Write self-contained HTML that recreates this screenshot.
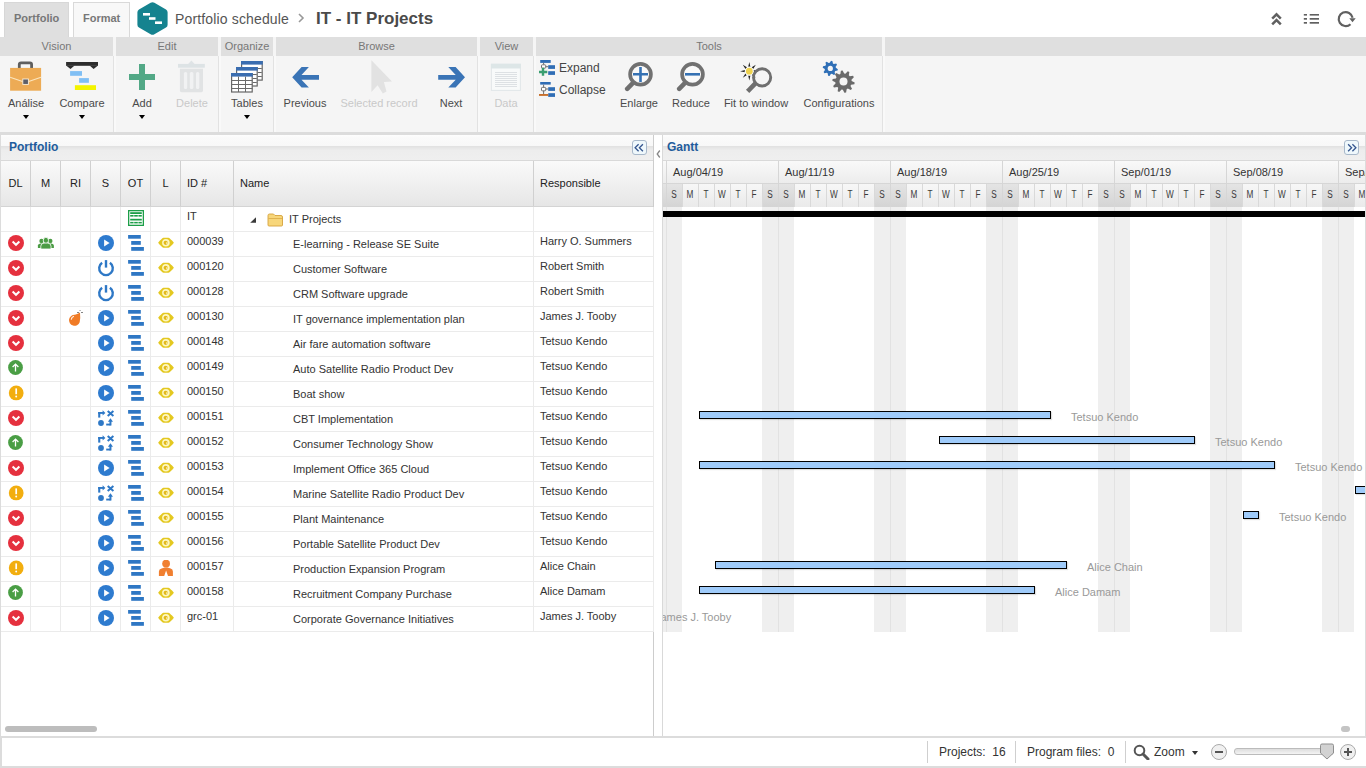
<!DOCTYPE html><html><head><meta charset="utf-8"><style>
*{box-sizing:border-box;margin:0;padding:0}
html,body{width:1366px;height:768px;overflow:hidden;background:#fff;font-family:"Liberation Sans",sans-serif;color:#333}
.a{position:absolute}
.t{position:absolute;white-space:nowrap}
svg{display:block}
.rb-h{position:absolute;top:37px;height:19px;background:#dfdfdf;font-size:11px;color:#777;text-align:center;line-height:19px}
.rb-b{position:absolute;top:56px;height:76px;background:#f4f4f4}
.lbl{position:absolute;font-size:11px;color:#4a4a4a;white-space:nowrap;text-align:center}
.dis{color:#c9c9c9}
.dd{position:absolute;width:0;height:0;border-left:3px solid transparent;border-right:3px solid transparent;border-top:4px solid #000}
.hc{position:absolute;top:161px;height:45px;font-size:11px;color:#222;line-height:45px;border-right:1px solid #d0d0d0;background:linear-gradient(#fafafa,#e6e6e6)}
.row{position:absolute;left:1px;width:652px;height:25px;border-bottom:1px solid #e8e8e8}

.ci{position:absolute}
.dt{position:absolute;font-size:11px;color:#333;white-space:nowrap}
.gl{position:absolute;font-size:11px;color:#999;white-space:nowrap}
.bar{position:absolute;height:8px;background:#9fcbfa;border:1px solid #000;box-shadow:1px 1px 1px rgba(0,0,0,0.12)}
</style></head><body><div class="a" style="left:4px;top:2px;width:65px;height:36px;background:#dfdfdf;border:1px solid #d7d7d7;border-bottom:none"></div><div class="t" style="left:14px;top:12px;font-size:11px;font-weight:bold;color:#777">Portfolio</div><div class="a" style="left:73px;top:2px;width:57px;height:36px;background:#f8f8f8;border:1px solid #d9d9d9;border-bottom:none"></div><div class="t" style="left:83px;top:12px;font-size:11px;font-weight:bold;color:#777">Format</div><svg class="a" style="left:136px;top:1px" width="33" height="35" viewBox="0 0 33 35"><path d="M16.5 1.2 Q17.5 1.2 18.4 1.7 L30 8.4 Q31.6 9.3 31.6 11.2 L31.6 23.8 Q31.6 25.7 30 26.6 L18.4 33.3 Q16.5 34.3 14.6 33.3 L3 26.6 Q1.4 25.7 1.4 23.8 L1.4 11.2 Q1.4 9.3 3 8.4 L14.6 1.7 Q15.5 1.2 16.5 1.2 Z" fill="#15838f"/><rect x="7" y="12" width="7" height="2.6" fill="#fff"/><rect x="13" y="16.2" width="6.5" height="2.6" fill="#fff"/><rect x="19" y="20.4" width="7" height="2.6" fill="#fff"/></svg><div class="t" style="left:175px;top:11px;font-size:14px;letter-spacing:0.15px;color:#555">Portfolio schedule</div><svg class="a" style="left:297px;top:12px" width="8" height="12" viewBox="0 0 8 12"><path d="M2 2 L6 6 L2 10" stroke="#999" stroke-width="1.6" fill="none"/></svg><div class="t" style="left:316px;top:9px;font-size:17px;font-weight:bold;color:#4a4a4a">IT - IT Projects</div><svg class="a" style="left:1270px;top:11px" width="14" height="16" viewBox="0 0 14 16"><path d="M2.2 7.6 L6.5 3.3 L10.8 7.6 M2.2 13.4 L6.5 9.1 L10.8 13.4" stroke="#606060" stroke-width="2.5" fill="none" stroke-linejoin="miter"/></svg><svg class="a" style="left:1302px;top:12px" width="19" height="14" viewBox="0 0 19 14"><g fill="#606060"><rect x="1.8" y="2" width="3.2" height="1.6"/><rect x="1.8" y="6" width="3.2" height="1.7"/><rect x="1.8" y="10" width="3.2" height="1.7"/><rect x="7.7" y="2" width="9.3" height="1.6"/><rect x="7.7" y="6" width="9.3" height="1.7"/><rect x="7.7" y="10" width="9.3" height="1.7"/></g></svg><svg class="a" style="left:1336px;top:9px" width="22" height="20" viewBox="0 0 22 20"><path d="M14.5 15.2 A7 7 0 1 1 16.6 8.7" stroke="#606060" stroke-width="2.2" fill="none"/><path d="M13.3 9.2 L19.7 9.2 L16.5 13.3 Z" fill="#606060"/></svg><div class="a" style="left:0;top:37px;width:1366px;height:95px;background:#f5f5f5"></div><div class="rb-h" style="left:0px;width:113px">Vision</div><div class="a" style="left:113px;top:56px;width:1px;height:76px;background:#e2e2e2"></div><div class="a" style="left:114px;top:56px;width:2px;height:76px;background:#f9f9f9"></div><div class="rb-h" style="left:116px;width:102px">Edit</div><div class="a" style="left:218px;top:56px;width:1px;height:76px;background:#e2e2e2"></div><div class="a" style="left:219px;top:56px;width:2px;height:76px;background:#f9f9f9"></div><div class="rb-h" style="left:221px;width:52px">Organize</div><div class="a" style="left:273px;top:56px;width:1px;height:76px;background:#e2e2e2"></div><div class="a" style="left:274px;top:56px;width:2px;height:76px;background:#f9f9f9"></div><div class="rb-h" style="left:276px;width:201px">Browse</div><div class="a" style="left:477px;top:56px;width:1px;height:76px;background:#e2e2e2"></div><div class="a" style="left:478px;top:56px;width:2px;height:76px;background:#f9f9f9"></div><div class="rb-h" style="left:480px;width:53px">View</div><div class="a" style="left:533px;top:56px;width:1px;height:76px;background:#e2e2e2"></div><div class="a" style="left:534px;top:56px;width:2px;height:76px;background:#f9f9f9"></div><div class="rb-h" style="left:536px;width:346px">Tools</div><div class="a" style="left:882px;top:56px;width:1px;height:76px;background:#e2e2e2"></div><div class="a" style="left:883px;top:56px;width:2px;height:76px;background:#f9f9f9"></div><div class="rb-h" style="left:885px;width:481px"></div><div class="a" style="left:0;top:132px;width:1366px;height:3px;background:#dcdcdc"></div><svg class="a" style="left:9px;top:61px" width="33" height="31" viewBox="0 0 33 31"><path d="M10.3 7 V3.6 Q10.3 1.9 12 1.9 H21 Q22.6 1.9 22.6 3.6 V7" stroke="#5f5f5f" stroke-width="2.8" fill="none"/><rect x="1.1" y="6.9" width="31" height="22.8" fill="#edab55"/><path d="M1.1 16.3 L13.5 20.4 M19.7 20.4 L32 16.3" stroke="#fbe6bf" stroke-width="1.1"/><rect x="13.8" y="18" width="5.6" height="5.4" fill="#5d5e68" stroke="#fdf0d8" stroke-width="0.9"/></svg><div class="lbl " style="left:-34px;width:120px;top:97px">Análise</div><div class="dd" style="left:23px;top:115px"></div><svg class="a" style="left:65px;top:61px" width="34" height="30" viewBox="0 0 34 30"><rect x="1.1" y="1" width="31.9" height="3.8" fill="#2d2d2d"/><path d="M1.1 4.5 L5.5 7.9 L9.6 4.5 Z M24.6 4.5 L28.6 7.9 L33 4.5 Z" fill="#2d2d2d"/><rect x="5.1" y="10.1" width="11.9" height="4.7" fill="#80bff4"/><rect x="14.1" y="17.1" width="9.8" height="4.7" fill="#80bff4"/><rect x="9.9" y="24.2" width="21.1" height="4.8" fill="#f4f400"/></svg><div class="lbl " style="left:22px;width:120px;top:97px">Compare</div><div class="dd" style="left:79px;top:115px"></div><svg class="a" style="left:128px;top:63px" width="28" height="28" viewBox="0 0 28 28"><path d="M11 1 H17 V11 H27 V17 H17 V27 H11 V17 H1 V11 H11 Z" fill="#52a886"/></svg><div class="lbl " style="left:82px;width:120px;top:97px">Add</div><div class="dd" style="left:139px;top:115px"></div><svg class="a" style="left:177px;top:60px" width="29" height="34" viewBox="0 0 29 34"><path d="M11.2 3.9 L14.4 0.4 L17.6 3.9 Z" fill="#dfe4e6"/><rect x="1" y="3.9" width="26.8" height="3.8" fill="#dde3e5"/><path d="M2.9 8.8 H26 V30.6 Q26 32.2 24.4 32.2 H4.5 Q2.9 32.2 2.9 30.6 Z" fill="#e1e3e4"/><g fill="#f1f2f3"><rect x="6.9" y="12.1" width="3.3" height="16.9" rx="1.5"/><rect x="12.8" y="12.1" width="3.6" height="16.9" rx="1.5"/><rect x="19" y="12.1" width="3.3" height="16.9" rx="1.5"/></g></svg><div class="lbl dis" style="left:132px;width:120px;top:97px">Delete</div><svg class="a" style="left:230px;top:60px" width="35" height="34" viewBox="0 0 35 34"><g fill="#fff" stroke="#666" stroke-width="1.2"><rect x="11.6" y="1.6" width="20.6" height="18.5"/><rect x="6.6" y="7.6" width="20.6" height="18.4"/><rect x="1.6" y="13.6" width="20.6" height="18.4"/></g><g fill="#3a6db0"><rect x="11" y="1" width="21.8" height="3.6"/><rect x="6" y="7" width="21.8" height="3.6"/><rect x="1" y="13" width="21.8" height="3.6"/></g><g stroke="#6a6a6a" stroke-width="1"><path d="M1.5 20.5 H22.5 M1.5 24.5 H22.5 M1.5 28.5 H22.5 M8.5 16.6 V32 M15.5 16.6 V32 M22.8 14.5 H26.8 M22.8 18.5 H26.8 M22.8 22.5 H26.8 M27.8 8.5 H31.8 M27.8 12.5 H31.8 M27.8 16.5 H31.8"/></g></svg><div class="lbl " style="left:187px;width:120px;top:97px">Tables</div><div class="dd" style="left:244px;top:115px"></div><svg class="a" style="left:291px;top:66px" width="30" height="23" viewBox="0 0 30 23"><path d="M1.20 11.30 L10.60 0.90 L17.90 0.90 L10.50 9.10 L28.00 9.10 L28.00 13.70 L10.50 13.70 L17.90 21.60 L10.60 21.60 Z" fill="#3a74b6"/></svg><div class="lbl " style="left:245px;width:120px;top:97px">Previous</div><svg class="a" style="left:370px;top:60px" width="24" height="35" viewBox="0 0 24 35"><path d="M1.4 0.2 L22 21.5 L13.9 22 L16.5 31.4 L12.8 33.5 L7.6 25.2 L1.4 31.9 Z" fill="#e2e2e2"/></svg><div class="lbl dis" style="left:319px;width:120px;top:97px">Selected record</div><svg class="a" style="left:437px;top:66px" width="30" height="23" viewBox="0 0 30 23"><path d="M28.00 11.30 L18.60 0.90 L11.30 0.90 L18.70 9.10 L1.20 9.10 L1.20 13.70 L18.70 13.70 L11.30 21.60 L18.60 21.60 Z" fill="#3a74b6"/></svg><div class="lbl " style="left:391px;width:120px;top:97px">Next</div><svg class="a" style="left:490px;top:63px" width="32" height="29" viewBox="0 0 32 29"><rect x="1.4" y="1.3" width="29" height="26.1" fill="#f8fafa" stroke="#e2e6e8" stroke-width="1"/><rect x="0.9" y="0.8" width="30" height="4.7" fill="#dde6e7"/><path d="M5 9.5 H27 M5 11.5 H27 M5 13.5 H27 M5 15.5 H27 M5 17.5 H27 M5 19.5 H27 M5 21.5 H27 M5 23.5 H27" stroke="#dde1e4" stroke-width="1"/></svg><div class="lbl dis" style="left:446px;width:120px;top:97px">Data</div><svg class="a" style="left:535px;top:56px" width="30" height="44" viewBox="0 0 30 44"><g fill="#2f6db5"><rect x="5.2" y="4" width="10.5" height="2.9"/><rect x="13.2" y="9.2" width="6.8" height="3.7"/><rect x="13.2" y="15.2" width="6.8" height="3.7"/><rect x="5.2" y="26" width="10.5" height="2.6"/><rect x="13.2" y="31.2" width="6.8" height="3.7"/><rect x="13.2" y="37.2" width="6.8" height="3.7"/></g><g stroke="#707070" stroke-width="1" fill="none"><path d="M8.6 6.9 V8.6 M10.9 10.7 H13.2"/><rect x="6.5" y="8.8" width="4.2" height="3.4" rx="0.8" fill="#fff"/><path d="M8.6 28.6 V31.2 M8.6 35 V38 M10.9 33 H13.2"/><rect x="6.5" y="31.4" width="4.2" height="3.4" rx="0.8" fill="#fff"/></g><path d="M4 16 H12.3 M8 11.8 V19.7" stroke="#3a9e70" stroke-width="2.4"/><rect x="4" y="38" width="9.2" height="1.9" fill="#c8702d"/></svg><div class="t" style="left:559px;top:61px;font-size:12px;color:#444">Expand</div><div class="t" style="left:559px;top:83px;font-size:12px;color:#444">Collapse</div><svg class="a" style="left:622px;top:61px" width="32" height="31" viewBox="0 0 32 31"><path d="M5.2 27.8 L10.8 22.2" stroke="#6f6f6f" stroke-width="4.6" stroke-linecap="round"/><circle cx="18.5" cy="13.3" r="10.4" fill="#fafafa" stroke="#717171" stroke-width="3.7"/><path d="M18.5 6 V21 M11 13.3 H26" stroke="#3672b4" stroke-width="2.6"/></svg><div class="lbl " style="left:579px;width:120px;top:97px">Enlarge</div><svg class="a" style="left:674px;top:61px" width="32" height="31" viewBox="0 0 32 31"><path d="M5.2 27.8 L10.8 22.2" stroke="#6f6f6f" stroke-width="4.6" stroke-linecap="round"/><circle cx="18.5" cy="13.3" r="10.4" fill="#fafafa" stroke="#717171" stroke-width="3.7"/><path d="M11 13.3 H26" stroke="#3672b4" stroke-width="2.6"/></svg><div class="lbl " style="left:631px;width:120px;top:97px">Reduce</div><svg class="a" style="left:739px;top:60px" width="35" height="34" viewBox="0 0 35 34"><path d="M9.14 7.16 L10.30 2.00 L11.46 7.16 Z M12.33 7.53 L16.81 4.69 L13.97 9.17 Z M14.34 10.04 L19.50 11.20 L14.34 12.36 Z M13.97 13.23 L16.81 17.71 L12.33 14.87 Z M11.46 15.24 L10.30 20.40 L9.14 15.24 Z M8.27 14.87 L3.79 17.71 L6.63 13.23 Z M6.26 12.36 L1.10 11.20 L6.26 10.04 Z M6.63 9.17 L3.79 4.69 L8.27 7.53 Z " fill="#222"/><circle cx="10.3" cy="11.2" r="4.6" fill="#fafafa"/><circle cx="10.3" cy="11.2" r="3.4" fill="#eed24e"/><path d="M10.2 29.8 L14.8 25" stroke="#6f6f6f" stroke-width="4.6" stroke-linecap="square"/><circle cx="23.1" cy="17.4" r="8.6" fill="none" stroke="#6f6f6f" stroke-width="2.9"/></svg><div class="lbl " style="left:696px;width:120px;top:97px">Fit to window</div><svg class="a" style="left:818px;top:58px" width="40" height="36" viewBox="0 0 40 36"><path d="M19.86 11.14 L19.57 12.61 L17.24 13.04 L16.63 13.95 L17.12 16.27 L15.88 17.10 L13.93 15.76 L12.85 15.97 L11.56 17.96 L10.09 17.67 L9.66 15.34 L8.75 14.73 L6.43 15.22 L5.60 13.98 L6.94 12.03 L6.73 10.95 L4.74 9.66 L5.03 8.19 L7.36 7.76 L7.97 6.85 L7.48 4.53 L8.72 3.70 L10.67 5.04 L11.75 4.83 L13.04 2.84 L14.51 3.13 L14.94 5.46 L15.85 6.07 L18.17 5.58 L19.00 6.82 L17.66 8.77 L17.87 9.85 Z" fill="#2f6fb6"/><circle cx="12.3" cy="10.4" r="2.6" fill="#f4f4f4"/><path d="M36.67 24.48 L36.39 26.21 L33.08 26.74 L32.49 27.88 L34.02 30.87 L32.77 32.12 L29.78 30.59 L28.64 31.18 L28.11 34.49 L26.38 34.77 L24.86 31.77 L23.59 31.57 L21.21 33.95 L19.65 33.15 L20.17 29.84 L19.26 28.93 L15.95 29.45 L15.15 27.89 L17.53 25.51 L17.33 24.24 L14.33 22.72 L14.61 20.99 L17.92 20.46 L18.51 19.32 L16.98 16.33 L18.23 15.08 L21.22 16.61 L22.36 16.02 L22.89 12.71 L24.62 12.43 L26.14 15.43 L27.41 15.63 L29.79 13.25 L31.35 14.05 L30.83 17.36 L31.74 18.27 L35.05 17.75 L35.85 19.31 L33.47 21.69 L33.67 22.96 Z" fill="#6a6a6a"/><circle cx="25.5" cy="23.6" r="4.0" fill="#f4f4f4"/></svg><div class="lbl " style="left:779px;width:120px;top:97px">Configurations</div><div class="a" style="left:0;top:135px;width:655px;height:602px;background:#fff;border-left:1px solid #dcdcdc"></div><div class="a" style="left:653px;top:135px;width:1px;height:602px;background:#cdcdcd"></div><div class="a" style="left:1px;top:135px;width:652px;height:26px;background:linear-gradient(#fdfdfd 0,#fafafa 10%,#f8f8f8 42%,#e2e2e2 46%,#e8e8e8 54%,#ededed 62%,#efefef 100%);border-bottom:1px solid #d9d9d9"></div><div class="t" style="left:9px;top:140px;font-size:12px;font-weight:bold;color:#1f5c9c">Portfolio</div><div class="a" style="left:632px;top:140px;width:15px;height:15px;border:1px solid #a8b8ca;border-radius:3px;background:#eff8fc"></div><svg class="a" style="left:633px;top:141px" width="13" height="13" viewBox="0 0 13 13"><path d="M5.6 3.2 L2.1 6.7 L5.6 10.2 M9.9 3.2 L6.4 6.7 L9.9 10.2" stroke="#34558f" stroke-width="1.3" fill="none"/></svg><div class="hc" style="left:1px;width:30px;text-align:center">DL</div><div class="hc" style="left:31px;width:30px;text-align:center">M</div><div class="hc" style="left:61px;width:30px;text-align:center">RI</div><div class="hc" style="left:91px;width:30px;text-align:center">S</div><div class="hc" style="left:121px;width:30px;text-align:center">OT</div><div class="hc" style="left:151px;width:30px;text-align:center">L</div><div class="hc" style="left:181px;width:53px;padding-left:6px;">ID #</div><div class="hc" style="left:234px;width:300px;padding-left:6px;">Name</div><div class="hc" style="left:534px;width:119px;padding-left:6px;border-right:none">Responsible</div><div class="a" style="left:1px;top:206px;width:652px;height:1px;background:#d4d4d4"></div><div class="a" style="left:30px;top:207px;width:1px;height:25px;background:#ebebeb"></div><div class="a" style="left:60px;top:207px;width:1px;height:25px;background:#ebebeb"></div><div class="a" style="left:90px;top:207px;width:1px;height:25px;background:#ebebeb"></div><div class="a" style="left:120px;top:207px;width:1px;height:25px;background:#ebebeb"></div><div class="a" style="left:150px;top:207px;width:1px;height:25px;background:#ebebeb"></div><div class="a" style="left:180px;top:207px;width:1px;height:25px;background:#ebebeb"></div><div class="a" style="left:233px;top:207px;width:1px;height:25px;background:#ebebeb"></div><div class="a" style="left:533px;top:207px;width:1px;height:25px;background:#ebebeb"></div><div class="a" style="left:653px;top:207px;width:1px;height:25px;background:#ebebeb"></div><div class="a" style="left:1px;top:231px;width:652px;height:1px;background:#ebebeb"></div><div class="ci" style="left:128px;top:210px"><svg width="16" height="16" viewBox="0 0 16 16"><rect x="0.65" y="0.65" width="14.7" height="14.7" fill="#fff" stroke="#1c9e48" stroke-width="1.3"/><g fill="#1c9e48"><rect x="2.2" y="2.2" width="11.6" height="1.8"/><rect x="2.2" y="5" width="3.4" height="1.6"/><rect x="6.2" y="5" width="3.6" height="1.6"/><rect x="10.4" y="5" width="3.4" height="1.6"/><rect x="2.2" y="8.8" width="11.6" height="1.7"/><rect x="2.2" y="11.9" width="3.4" height="1.5"/><rect x="6.2" y="11.9" width="3.6" height="1.5"/><rect x="10.4" y="11.9" width="3.4" height="1.5"/></g></svg></div><div class="dt" style="left:187px;top:210px">IT</div><svg class="a" style="left:249px;top:216px" width="8" height="8" viewBox="0 0 8 8"><path d="M7 1.2 V6.8 H1.2 Z" fill="#3a3a3a"/></svg><svg class="a" style="left:267px;top:213px" width="17" height="14" viewBox="0 0 17 14"><path d="M1 2.5 Q1 1 2.5 1 H6.5 L8 2.5 H14 Q15.5 2.5 15.5 4 V12 Q15.5 13 14.5 13 H2 Q1 13 1 12 Z" fill="#f7d67a" stroke="#d6a33c" stroke-width="0.9"/><path d="M1.5 5.5 H15.5" stroke="#d6a33c" stroke-width="0.7"/></svg><div class="dt" style="left:289px;top:213px">IT Projects</div><div class="a" style="left:30px;top:232px;width:1px;height:25px;background:#ebebeb"></div><div class="a" style="left:60px;top:232px;width:1px;height:25px;background:#ebebeb"></div><div class="a" style="left:90px;top:232px;width:1px;height:25px;background:#ebebeb"></div><div class="a" style="left:120px;top:232px;width:1px;height:25px;background:#ebebeb"></div><div class="a" style="left:150px;top:232px;width:1px;height:25px;background:#ebebeb"></div><div class="a" style="left:180px;top:232px;width:1px;height:25px;background:#ebebeb"></div><div class="a" style="left:233px;top:232px;width:1px;height:25px;background:#ebebeb"></div><div class="a" style="left:533px;top:232px;width:1px;height:25px;background:#ebebeb"></div><div class="a" style="left:653px;top:232px;width:1px;height:25px;background:#ebebeb"></div><div class="a" style="left:1px;top:256px;width:652px;height:1px;background:#ebebeb"></div><div class="ci" style="left:8px;top:235px"><svg width="16" height="16" viewBox="0 0 16 16"><circle cx="8" cy="8" r="8" fill="#e5303e"/><path d="M4.6 6.6 L8 9.8 L11.4 6.6" stroke="#fff" stroke-width="2" fill="none"/></svg></div><div class="ci" style="left:37px;top:236px"><svg width="18" height="14" viewBox="0 0 18 14"><g fill="#4b9c44"><circle cx="4.5" cy="4.9" r="2.2"/><circle cx="13.3" cy="4.9" r="2.2"/><path d="M0.9 12 V9.6 Q0.9 7.6 3.4 7.4 H6 V12 Z"/><path d="M16.9 12 V9.6 Q16.9 7.6 14.4 7.4 H11.8 V12 Z"/></g><g fill="#4b9c44" stroke="#fff" stroke-width="0.8"><ellipse cx="8.9" cy="4.4" rx="2.6" ry="3.1"/><path d="M3.8 13 V10.2 Q3.8 7.2 7 7.1 H10.8 Q14 7.2 14 10.2 V13 Z"/></g></svg></div><div class="ci" style="left:98px;top:235px"><svg width="16" height="16" viewBox="0 0 16 16"><circle cx="8" cy="8" r="8" fill="#2e7bcf"/><path d="M6.1 4.4 L11.6 8 L6.1 11.6 Z" fill="#fff"/></svg></div><div class="ci" style="left:127px;top:235px"><svg width="17" height="17" viewBox="0 0 17 17"><rect x="1.1" y="0" width="12.7" height="3.7" fill="#2e77c4"/><rect x="4.2" y="6" width="9.6" height="3.8" fill="#2e77c4"/><rect x="4.2" y="12" width="12.7" height="3.8" fill="#2e77c4"/></svg></div><div class="ci" style="left:158px;top:237px"><svg width="17" height="12" viewBox="0 0 17 12"><path d="M0.1 5.8 Q3.5 1.6 5.4 0.8 H10.5 Q12.5 1.6 15.9 5.8 Q12.5 10 10.5 10.8 H5.4 Q3.5 10 0.1 5.8 Z" fill="#e4c820"/><circle cx="7.9" cy="5.8" r="3.8" fill="#fdf7c0"/><circle cx="7.7" cy="5.8" r="2.1" fill="#e2b91c"/><circle cx="8.8" cy="6.1" r="0.8" fill="#fdf7c0"/></svg></div><div class="dt" style="left:187px;top:235px">000039</div><div class="dt" style="left:293px;top:238px">E-learning - Release SE Suite</div><div class="dt" style="left:540px;top:235px">Harry O. Summers</div><div class="a" style="left:30px;top:257px;width:1px;height:25px;background:#ebebeb"></div><div class="a" style="left:60px;top:257px;width:1px;height:25px;background:#ebebeb"></div><div class="a" style="left:90px;top:257px;width:1px;height:25px;background:#ebebeb"></div><div class="a" style="left:120px;top:257px;width:1px;height:25px;background:#ebebeb"></div><div class="a" style="left:150px;top:257px;width:1px;height:25px;background:#ebebeb"></div><div class="a" style="left:180px;top:257px;width:1px;height:25px;background:#ebebeb"></div><div class="a" style="left:233px;top:257px;width:1px;height:25px;background:#ebebeb"></div><div class="a" style="left:533px;top:257px;width:1px;height:25px;background:#ebebeb"></div><div class="a" style="left:653px;top:257px;width:1px;height:25px;background:#ebebeb"></div><div class="a" style="left:1px;top:281px;width:652px;height:1px;background:#ebebeb"></div><div class="ci" style="left:8px;top:260px"><svg width="16" height="16" viewBox="0 0 16 16"><circle cx="8" cy="8" r="8" fill="#e5303e"/><path d="M4.6 6.6 L8 9.8 L11.4 6.6" stroke="#fff" stroke-width="2" fill="none"/></svg></div><div class="ci" style="left:97px;top:259px"><svg width="18" height="18" viewBox="0 0 18 18"><path d="M12.9 3.73 A6.8 6.8 0 1 1 5.1 3.73" stroke="#2e78c6" stroke-width="2.4" fill="none"/><path d="M9 1.1 V8.6" stroke="#2e78c6" stroke-width="2.4" fill="none"/></svg></div><div class="ci" style="left:127px;top:260px"><svg width="17" height="17" viewBox="0 0 17 17"><rect x="1.1" y="0" width="12.7" height="3.7" fill="#2e77c4"/><rect x="4.2" y="6" width="9.6" height="3.8" fill="#2e77c4"/><rect x="4.2" y="12" width="12.7" height="3.8" fill="#2e77c4"/></svg></div><div class="ci" style="left:158px;top:262px"><svg width="17" height="12" viewBox="0 0 17 12"><path d="M0.1 5.8 Q3.5 1.6 5.4 0.8 H10.5 Q12.5 1.6 15.9 5.8 Q12.5 10 10.5 10.8 H5.4 Q3.5 10 0.1 5.8 Z" fill="#e4c820"/><circle cx="7.9" cy="5.8" r="3.8" fill="#fdf7c0"/><circle cx="7.7" cy="5.8" r="2.1" fill="#e2b91c"/><circle cx="8.8" cy="6.1" r="0.8" fill="#fdf7c0"/></svg></div><div class="dt" style="left:187px;top:260px">000120</div><div class="dt" style="left:293px;top:263px">Customer Software</div><div class="dt" style="left:540px;top:260px">Robert Smith</div><div class="a" style="left:30px;top:282px;width:1px;height:25px;background:#ebebeb"></div><div class="a" style="left:60px;top:282px;width:1px;height:25px;background:#ebebeb"></div><div class="a" style="left:90px;top:282px;width:1px;height:25px;background:#ebebeb"></div><div class="a" style="left:120px;top:282px;width:1px;height:25px;background:#ebebeb"></div><div class="a" style="left:150px;top:282px;width:1px;height:25px;background:#ebebeb"></div><div class="a" style="left:180px;top:282px;width:1px;height:25px;background:#ebebeb"></div><div class="a" style="left:233px;top:282px;width:1px;height:25px;background:#ebebeb"></div><div class="a" style="left:533px;top:282px;width:1px;height:25px;background:#ebebeb"></div><div class="a" style="left:653px;top:282px;width:1px;height:25px;background:#ebebeb"></div><div class="a" style="left:1px;top:306px;width:652px;height:1px;background:#ebebeb"></div><div class="ci" style="left:8px;top:285px"><svg width="16" height="16" viewBox="0 0 16 16"><circle cx="8" cy="8" r="8" fill="#e5303e"/><path d="M4.6 6.6 L8 9.8 L11.4 6.6" stroke="#fff" stroke-width="2" fill="none"/></svg></div><div class="ci" style="left:97px;top:284px"><svg width="18" height="18" viewBox="0 0 18 18"><path d="M12.9 3.73 A6.8 6.8 0 1 1 5.1 3.73" stroke="#2e78c6" stroke-width="2.4" fill="none"/><path d="M9 1.1 V8.6" stroke="#2e78c6" stroke-width="2.4" fill="none"/></svg></div><div class="ci" style="left:127px;top:285px"><svg width="17" height="17" viewBox="0 0 17 17"><rect x="1.1" y="0" width="12.7" height="3.7" fill="#2e77c4"/><rect x="4.2" y="6" width="9.6" height="3.8" fill="#2e77c4"/><rect x="4.2" y="12" width="12.7" height="3.8" fill="#2e77c4"/></svg></div><div class="ci" style="left:158px;top:287px"><svg width="17" height="12" viewBox="0 0 17 12"><path d="M0.1 5.8 Q3.5 1.6 5.4 0.8 H10.5 Q12.5 1.6 15.9 5.8 Q12.5 10 10.5 10.8 H5.4 Q3.5 10 0.1 5.8 Z" fill="#e4c820"/><circle cx="7.9" cy="5.8" r="3.8" fill="#fdf7c0"/><circle cx="7.7" cy="5.8" r="2.1" fill="#e2b91c"/><circle cx="8.8" cy="6.1" r="0.8" fill="#fdf7c0"/></svg></div><div class="dt" style="left:187px;top:285px">000128</div><div class="dt" style="left:293px;top:288px">CRM Software upgrade</div><div class="dt" style="left:540px;top:285px">Robert Smith</div><div class="a" style="left:30px;top:307px;width:1px;height:25px;background:#ebebeb"></div><div class="a" style="left:60px;top:307px;width:1px;height:25px;background:#ebebeb"></div><div class="a" style="left:90px;top:307px;width:1px;height:25px;background:#ebebeb"></div><div class="a" style="left:120px;top:307px;width:1px;height:25px;background:#ebebeb"></div><div class="a" style="left:150px;top:307px;width:1px;height:25px;background:#ebebeb"></div><div class="a" style="left:180px;top:307px;width:1px;height:25px;background:#ebebeb"></div><div class="a" style="left:233px;top:307px;width:1px;height:25px;background:#ebebeb"></div><div class="a" style="left:533px;top:307px;width:1px;height:25px;background:#ebebeb"></div><div class="a" style="left:653px;top:307px;width:1px;height:25px;background:#ebebeb"></div><div class="a" style="left:1px;top:331px;width:652px;height:1px;background:#ebebeb"></div><div class="ci" style="left:8px;top:310px"><svg width="16" height="16" viewBox="0 0 16 16"><circle cx="8" cy="8" r="8" fill="#e5303e"/><path d="M4.6 6.6 L8 9.8 L11.4 6.6" stroke="#fff" stroke-width="2" fill="none"/></svg></div><div class="ci" style="left:67px;top:309px"><svg width="17" height="18" viewBox="0 0 17 18"><path d="M13 3.6 Q13.6 9 12.67 13.18 A5.5 5.5 0 1 1 7.98 5.82 Q11 5.2 13 3.6 Z" fill="#f07b26"/><path d="M4.2 10.6 Q4.6 8 7 7.3" stroke="#fff" stroke-width="1.1" fill="none" opacity="0.9"/><g fill="#777"><rect x="10" y="3" width="2" height="0.9"/><rect x="14" y="3" width="2" height="0.9"/><rect x="12.6" y="1" width="0.9" height="1"/></g></svg></div><div class="ci" style="left:98px;top:310px"><svg width="16" height="16" viewBox="0 0 16 16"><circle cx="8" cy="8" r="8" fill="#2e7bcf"/><path d="M6.1 4.4 L11.6 8 L6.1 11.6 Z" fill="#fff"/></svg></div><div class="ci" style="left:127px;top:310px"><svg width="17" height="17" viewBox="0 0 17 17"><rect x="1.1" y="0" width="12.7" height="3.7" fill="#2e77c4"/><rect x="4.2" y="6" width="9.6" height="3.8" fill="#2e77c4"/><rect x="4.2" y="12" width="12.7" height="3.8" fill="#2e77c4"/></svg></div><div class="ci" style="left:158px;top:312px"><svg width="17" height="12" viewBox="0 0 17 12"><path d="M0.1 5.8 Q3.5 1.6 5.4 0.8 H10.5 Q12.5 1.6 15.9 5.8 Q12.5 10 10.5 10.8 H5.4 Q3.5 10 0.1 5.8 Z" fill="#e4c820"/><circle cx="7.9" cy="5.8" r="3.8" fill="#fdf7c0"/><circle cx="7.7" cy="5.8" r="2.1" fill="#e2b91c"/><circle cx="8.8" cy="6.1" r="0.8" fill="#fdf7c0"/></svg></div><div class="dt" style="left:187px;top:310px">000130</div><div class="dt" style="left:293px;top:313px">IT governance implementation plan</div><div class="dt" style="left:540px;top:310px">James J. Tooby</div><div class="a" style="left:30px;top:332px;width:1px;height:25px;background:#ebebeb"></div><div class="a" style="left:60px;top:332px;width:1px;height:25px;background:#ebebeb"></div><div class="a" style="left:90px;top:332px;width:1px;height:25px;background:#ebebeb"></div><div class="a" style="left:120px;top:332px;width:1px;height:25px;background:#ebebeb"></div><div class="a" style="left:150px;top:332px;width:1px;height:25px;background:#ebebeb"></div><div class="a" style="left:180px;top:332px;width:1px;height:25px;background:#ebebeb"></div><div class="a" style="left:233px;top:332px;width:1px;height:25px;background:#ebebeb"></div><div class="a" style="left:533px;top:332px;width:1px;height:25px;background:#ebebeb"></div><div class="a" style="left:653px;top:332px;width:1px;height:25px;background:#ebebeb"></div><div class="a" style="left:1px;top:356px;width:652px;height:1px;background:#ebebeb"></div><div class="ci" style="left:8px;top:335px"><svg width="16" height="16" viewBox="0 0 16 16"><circle cx="8" cy="8" r="8" fill="#e5303e"/><path d="M4.6 6.6 L8 9.8 L11.4 6.6" stroke="#fff" stroke-width="2" fill="none"/></svg></div><div class="ci" style="left:98px;top:335px"><svg width="16" height="16" viewBox="0 0 16 16"><circle cx="8" cy="8" r="8" fill="#2e7bcf"/><path d="M6.1 4.4 L11.6 8 L6.1 11.6 Z" fill="#fff"/></svg></div><div class="ci" style="left:127px;top:335px"><svg width="17" height="17" viewBox="0 0 17 17"><rect x="1.1" y="0" width="12.7" height="3.7" fill="#2e77c4"/><rect x="4.2" y="6" width="9.6" height="3.8" fill="#2e77c4"/><rect x="4.2" y="12" width="12.7" height="3.8" fill="#2e77c4"/></svg></div><div class="ci" style="left:158px;top:337px"><svg width="17" height="12" viewBox="0 0 17 12"><path d="M0.1 5.8 Q3.5 1.6 5.4 0.8 H10.5 Q12.5 1.6 15.9 5.8 Q12.5 10 10.5 10.8 H5.4 Q3.5 10 0.1 5.8 Z" fill="#e4c820"/><circle cx="7.9" cy="5.8" r="3.8" fill="#fdf7c0"/><circle cx="7.7" cy="5.8" r="2.1" fill="#e2b91c"/><circle cx="8.8" cy="6.1" r="0.8" fill="#fdf7c0"/></svg></div><div class="dt" style="left:187px;top:335px">000148</div><div class="dt" style="left:293px;top:338px">Air fare automation software</div><div class="dt" style="left:540px;top:335px">Tetsuo Kendo</div><div class="a" style="left:30px;top:357px;width:1px;height:25px;background:#ebebeb"></div><div class="a" style="left:60px;top:357px;width:1px;height:25px;background:#ebebeb"></div><div class="a" style="left:90px;top:357px;width:1px;height:25px;background:#ebebeb"></div><div class="a" style="left:120px;top:357px;width:1px;height:25px;background:#ebebeb"></div><div class="a" style="left:150px;top:357px;width:1px;height:25px;background:#ebebeb"></div><div class="a" style="left:180px;top:357px;width:1px;height:25px;background:#ebebeb"></div><div class="a" style="left:233px;top:357px;width:1px;height:25px;background:#ebebeb"></div><div class="a" style="left:533px;top:357px;width:1px;height:25px;background:#ebebeb"></div><div class="a" style="left:653px;top:357px;width:1px;height:25px;background:#ebebeb"></div><div class="a" style="left:1px;top:381px;width:652px;height:1px;background:#ebebeb"></div><div class="ci" style="left:8px;top:360px"><svg width="16" height="16" viewBox="0 0 16 16"><circle cx="7.5" cy="7.5" r="7.4" fill="#4a9e45"/><path d="M7.5 11.6 V4.2 M4.6 7 L7.5 4.1 L10.4 7" stroke="#fff" stroke-width="1.3" fill="none"/></svg></div><div class="ci" style="left:98px;top:360px"><svg width="16" height="16" viewBox="0 0 16 16"><circle cx="8" cy="8" r="8" fill="#2e7bcf"/><path d="M6.1 4.4 L11.6 8 L6.1 11.6 Z" fill="#fff"/></svg></div><div class="ci" style="left:127px;top:360px"><svg width="17" height="17" viewBox="0 0 17 17"><rect x="1.1" y="0" width="12.7" height="3.7" fill="#2e77c4"/><rect x="4.2" y="6" width="9.6" height="3.8" fill="#2e77c4"/><rect x="4.2" y="12" width="12.7" height="3.8" fill="#2e77c4"/></svg></div><div class="ci" style="left:158px;top:362px"><svg width="17" height="12" viewBox="0 0 17 12"><path d="M0.1 5.8 Q3.5 1.6 5.4 0.8 H10.5 Q12.5 1.6 15.9 5.8 Q12.5 10 10.5 10.8 H5.4 Q3.5 10 0.1 5.8 Z" fill="#e4c820"/><circle cx="7.9" cy="5.8" r="3.8" fill="#fdf7c0"/><circle cx="7.7" cy="5.8" r="2.1" fill="#e2b91c"/><circle cx="8.8" cy="6.1" r="0.8" fill="#fdf7c0"/></svg></div><div class="dt" style="left:187px;top:360px">000149</div><div class="dt" style="left:293px;top:363px">Auto Satellite Radio Product Dev</div><div class="dt" style="left:540px;top:360px">Tetsuo Kendo</div><div class="a" style="left:30px;top:382px;width:1px;height:25px;background:#ebebeb"></div><div class="a" style="left:60px;top:382px;width:1px;height:25px;background:#ebebeb"></div><div class="a" style="left:90px;top:382px;width:1px;height:25px;background:#ebebeb"></div><div class="a" style="left:120px;top:382px;width:1px;height:25px;background:#ebebeb"></div><div class="a" style="left:150px;top:382px;width:1px;height:25px;background:#ebebeb"></div><div class="a" style="left:180px;top:382px;width:1px;height:25px;background:#ebebeb"></div><div class="a" style="left:233px;top:382px;width:1px;height:25px;background:#ebebeb"></div><div class="a" style="left:533px;top:382px;width:1px;height:25px;background:#ebebeb"></div><div class="a" style="left:653px;top:382px;width:1px;height:25px;background:#ebebeb"></div><div class="a" style="left:1px;top:406px;width:652px;height:1px;background:#ebebeb"></div><div class="ci" style="left:8px;top:385px"><svg width="16" height="16" viewBox="0 0 16 16"><circle cx="8.2" cy="7.9" r="7.4" fill="#f2ae0f"/><path d="M8.2 3.4 V9.2" stroke="#fff" stroke-width="1.7" fill="none"/><circle cx="8.2" cy="11.5" r="0.95" fill="#fff"/></svg></div><div class="ci" style="left:98px;top:385px"><svg width="16" height="16" viewBox="0 0 16 16"><circle cx="8" cy="8" r="8" fill="#2e7bcf"/><path d="M6.1 4.4 L11.6 8 L6.1 11.6 Z" fill="#fff"/></svg></div><div class="ci" style="left:127px;top:385px"><svg width="17" height="17" viewBox="0 0 17 17"><rect x="1.1" y="0" width="12.7" height="3.7" fill="#2e77c4"/><rect x="4.2" y="6" width="9.6" height="3.8" fill="#2e77c4"/><rect x="4.2" y="12" width="12.7" height="3.8" fill="#2e77c4"/></svg></div><div class="ci" style="left:158px;top:387px"><svg width="17" height="12" viewBox="0 0 17 12"><path d="M0.1 5.8 Q3.5 1.6 5.4 0.8 H10.5 Q12.5 1.6 15.9 5.8 Q12.5 10 10.5 10.8 H5.4 Q3.5 10 0.1 5.8 Z" fill="#e4c820"/><circle cx="7.9" cy="5.8" r="3.8" fill="#fdf7c0"/><circle cx="7.7" cy="5.8" r="2.1" fill="#e2b91c"/><circle cx="8.8" cy="6.1" r="0.8" fill="#fdf7c0"/></svg></div><div class="dt" style="left:187px;top:385px">000150</div><div class="dt" style="left:293px;top:388px">Boat show</div><div class="dt" style="left:540px;top:385px">Tetsuo Kendo</div><div class="a" style="left:30px;top:407px;width:1px;height:25px;background:#ebebeb"></div><div class="a" style="left:60px;top:407px;width:1px;height:25px;background:#ebebeb"></div><div class="a" style="left:90px;top:407px;width:1px;height:25px;background:#ebebeb"></div><div class="a" style="left:120px;top:407px;width:1px;height:25px;background:#ebebeb"></div><div class="a" style="left:150px;top:407px;width:1px;height:25px;background:#ebebeb"></div><div class="a" style="left:180px;top:407px;width:1px;height:25px;background:#ebebeb"></div><div class="a" style="left:233px;top:407px;width:1px;height:25px;background:#ebebeb"></div><div class="a" style="left:533px;top:407px;width:1px;height:25px;background:#ebebeb"></div><div class="a" style="left:653px;top:407px;width:1px;height:25px;background:#ebebeb"></div><div class="a" style="left:1px;top:431px;width:652px;height:1px;background:#ebebeb"></div><div class="ci" style="left:8px;top:410px"><svg width="16" height="16" viewBox="0 0 16 16"><circle cx="8" cy="8" r="8" fill="#e5303e"/><path d="M4.6 6.6 L8 9.8 L11.4 6.6" stroke="#fff" stroke-width="2" fill="none"/></svg></div><div class="ci" style="left:97px;top:409px"><svg width="18" height="18" viewBox="0 0 18 18"><g fill="#2e78c6"><rect x="1.2" y="3" width="2.1" height="5.6"/><rect x="1.2" y="3" width="4.8" height="1.9"/><path d="M5.6 1.3 L8.4 3.95 L5.6 6.6 Z"/><circle cx="4" cy="14" r="2.9"/><rect x="9.2" y="14.6" width="4.4" height="1.9"/><rect x="12.45" y="11.8" width="2" height="4.7"/><path d="M10.9 12.8 L13.45 9.3 L16 12.8 Z"/></g><path d="M10.7 2 L16.4 7.1 M16.4 2 L10.7 7.1" stroke="#2e78c6" stroke-width="2" fill="none"/></svg></div><div class="ci" style="left:127px;top:410px"><svg width="17" height="17" viewBox="0 0 17 17"><rect x="1.1" y="0" width="12.7" height="3.7" fill="#2e77c4"/><rect x="4.2" y="6" width="9.6" height="3.8" fill="#2e77c4"/><rect x="4.2" y="12" width="12.7" height="3.8" fill="#2e77c4"/></svg></div><div class="ci" style="left:158px;top:412px"><svg width="17" height="12" viewBox="0 0 17 12"><path d="M0.1 5.8 Q3.5 1.6 5.4 0.8 H10.5 Q12.5 1.6 15.9 5.8 Q12.5 10 10.5 10.8 H5.4 Q3.5 10 0.1 5.8 Z" fill="#e4c820"/><circle cx="7.9" cy="5.8" r="3.8" fill="#fdf7c0"/><circle cx="7.7" cy="5.8" r="2.1" fill="#e2b91c"/><circle cx="8.8" cy="6.1" r="0.8" fill="#fdf7c0"/></svg></div><div class="dt" style="left:187px;top:410px">000151</div><div class="dt" style="left:293px;top:413px">CBT Implementation</div><div class="dt" style="left:540px;top:410px">Tetsuo Kendo</div><div class="a" style="left:30px;top:432px;width:1px;height:25px;background:#ebebeb"></div><div class="a" style="left:60px;top:432px;width:1px;height:25px;background:#ebebeb"></div><div class="a" style="left:90px;top:432px;width:1px;height:25px;background:#ebebeb"></div><div class="a" style="left:120px;top:432px;width:1px;height:25px;background:#ebebeb"></div><div class="a" style="left:150px;top:432px;width:1px;height:25px;background:#ebebeb"></div><div class="a" style="left:180px;top:432px;width:1px;height:25px;background:#ebebeb"></div><div class="a" style="left:233px;top:432px;width:1px;height:25px;background:#ebebeb"></div><div class="a" style="left:533px;top:432px;width:1px;height:25px;background:#ebebeb"></div><div class="a" style="left:653px;top:432px;width:1px;height:25px;background:#ebebeb"></div><div class="a" style="left:1px;top:456px;width:652px;height:1px;background:#ebebeb"></div><div class="ci" style="left:8px;top:435px"><svg width="16" height="16" viewBox="0 0 16 16"><circle cx="7.5" cy="7.5" r="7.4" fill="#4a9e45"/><path d="M7.5 11.6 V4.2 M4.6 7 L7.5 4.1 L10.4 7" stroke="#fff" stroke-width="1.3" fill="none"/></svg></div><div class="ci" style="left:97px;top:434px"><svg width="18" height="18" viewBox="0 0 18 18"><g fill="#2e78c6"><rect x="1.2" y="3" width="2.1" height="5.6"/><rect x="1.2" y="3" width="4.8" height="1.9"/><path d="M5.6 1.3 L8.4 3.95 L5.6 6.6 Z"/><circle cx="4" cy="14" r="2.9"/><rect x="9.2" y="14.6" width="4.4" height="1.9"/><rect x="12.45" y="11.8" width="2" height="4.7"/><path d="M10.9 12.8 L13.45 9.3 L16 12.8 Z"/></g><path d="M10.7 2 L16.4 7.1 M16.4 2 L10.7 7.1" stroke="#2e78c6" stroke-width="2" fill="none"/></svg></div><div class="ci" style="left:127px;top:435px"><svg width="17" height="17" viewBox="0 0 17 17"><rect x="1.1" y="0" width="12.7" height="3.7" fill="#2e77c4"/><rect x="4.2" y="6" width="9.6" height="3.8" fill="#2e77c4"/><rect x="4.2" y="12" width="12.7" height="3.8" fill="#2e77c4"/></svg></div><div class="ci" style="left:158px;top:437px"><svg width="17" height="12" viewBox="0 0 17 12"><path d="M0.1 5.8 Q3.5 1.6 5.4 0.8 H10.5 Q12.5 1.6 15.9 5.8 Q12.5 10 10.5 10.8 H5.4 Q3.5 10 0.1 5.8 Z" fill="#e4c820"/><circle cx="7.9" cy="5.8" r="3.8" fill="#fdf7c0"/><circle cx="7.7" cy="5.8" r="2.1" fill="#e2b91c"/><circle cx="8.8" cy="6.1" r="0.8" fill="#fdf7c0"/></svg></div><div class="dt" style="left:187px;top:435px">000152</div><div class="dt" style="left:293px;top:438px">Consumer Technology Show</div><div class="dt" style="left:540px;top:435px">Tetsuo Kendo</div><div class="a" style="left:30px;top:457px;width:1px;height:25px;background:#ebebeb"></div><div class="a" style="left:60px;top:457px;width:1px;height:25px;background:#ebebeb"></div><div class="a" style="left:90px;top:457px;width:1px;height:25px;background:#ebebeb"></div><div class="a" style="left:120px;top:457px;width:1px;height:25px;background:#ebebeb"></div><div class="a" style="left:150px;top:457px;width:1px;height:25px;background:#ebebeb"></div><div class="a" style="left:180px;top:457px;width:1px;height:25px;background:#ebebeb"></div><div class="a" style="left:233px;top:457px;width:1px;height:25px;background:#ebebeb"></div><div class="a" style="left:533px;top:457px;width:1px;height:25px;background:#ebebeb"></div><div class="a" style="left:653px;top:457px;width:1px;height:25px;background:#ebebeb"></div><div class="a" style="left:1px;top:481px;width:652px;height:1px;background:#ebebeb"></div><div class="ci" style="left:8px;top:460px"><svg width="16" height="16" viewBox="0 0 16 16"><circle cx="8" cy="8" r="8" fill="#e5303e"/><path d="M4.6 6.6 L8 9.8 L11.4 6.6" stroke="#fff" stroke-width="2" fill="none"/></svg></div><div class="ci" style="left:98px;top:460px"><svg width="16" height="16" viewBox="0 0 16 16"><circle cx="8" cy="8" r="8" fill="#2e7bcf"/><path d="M6.1 4.4 L11.6 8 L6.1 11.6 Z" fill="#fff"/></svg></div><div class="ci" style="left:127px;top:460px"><svg width="17" height="17" viewBox="0 0 17 17"><rect x="1.1" y="0" width="12.7" height="3.7" fill="#2e77c4"/><rect x="4.2" y="6" width="9.6" height="3.8" fill="#2e77c4"/><rect x="4.2" y="12" width="12.7" height="3.8" fill="#2e77c4"/></svg></div><div class="ci" style="left:158px;top:462px"><svg width="17" height="12" viewBox="0 0 17 12"><path d="M0.1 5.8 Q3.5 1.6 5.4 0.8 H10.5 Q12.5 1.6 15.9 5.8 Q12.5 10 10.5 10.8 H5.4 Q3.5 10 0.1 5.8 Z" fill="#e4c820"/><circle cx="7.9" cy="5.8" r="3.8" fill="#fdf7c0"/><circle cx="7.7" cy="5.8" r="2.1" fill="#e2b91c"/><circle cx="8.8" cy="6.1" r="0.8" fill="#fdf7c0"/></svg></div><div class="dt" style="left:187px;top:460px">000153</div><div class="dt" style="left:293px;top:463px">Implement Office 365 Cloud</div><div class="dt" style="left:540px;top:460px">Tetsuo Kendo</div><div class="a" style="left:30px;top:482px;width:1px;height:25px;background:#ebebeb"></div><div class="a" style="left:60px;top:482px;width:1px;height:25px;background:#ebebeb"></div><div class="a" style="left:90px;top:482px;width:1px;height:25px;background:#ebebeb"></div><div class="a" style="left:120px;top:482px;width:1px;height:25px;background:#ebebeb"></div><div class="a" style="left:150px;top:482px;width:1px;height:25px;background:#ebebeb"></div><div class="a" style="left:180px;top:482px;width:1px;height:25px;background:#ebebeb"></div><div class="a" style="left:233px;top:482px;width:1px;height:25px;background:#ebebeb"></div><div class="a" style="left:533px;top:482px;width:1px;height:25px;background:#ebebeb"></div><div class="a" style="left:653px;top:482px;width:1px;height:25px;background:#ebebeb"></div><div class="a" style="left:1px;top:506px;width:652px;height:1px;background:#ebebeb"></div><div class="ci" style="left:8px;top:485px"><svg width="16" height="16" viewBox="0 0 16 16"><circle cx="8.2" cy="7.9" r="7.4" fill="#f2ae0f"/><path d="M8.2 3.4 V9.2" stroke="#fff" stroke-width="1.7" fill="none"/><circle cx="8.2" cy="11.5" r="0.95" fill="#fff"/></svg></div><div class="ci" style="left:97px;top:484px"><svg width="18" height="18" viewBox="0 0 18 18"><g fill="#2e78c6"><rect x="1.2" y="3" width="2.1" height="5.6"/><rect x="1.2" y="3" width="4.8" height="1.9"/><path d="M5.6 1.3 L8.4 3.95 L5.6 6.6 Z"/><circle cx="4" cy="14" r="2.9"/><rect x="9.2" y="14.6" width="4.4" height="1.9"/><rect x="12.45" y="11.8" width="2" height="4.7"/><path d="M10.9 12.8 L13.45 9.3 L16 12.8 Z"/></g><path d="M10.7 2 L16.4 7.1 M16.4 2 L10.7 7.1" stroke="#2e78c6" stroke-width="2" fill="none"/></svg></div><div class="ci" style="left:127px;top:485px"><svg width="17" height="17" viewBox="0 0 17 17"><rect x="1.1" y="0" width="12.7" height="3.7" fill="#2e77c4"/><rect x="4.2" y="6" width="9.6" height="3.8" fill="#2e77c4"/><rect x="4.2" y="12" width="12.7" height="3.8" fill="#2e77c4"/></svg></div><div class="ci" style="left:158px;top:487px"><svg width="17" height="12" viewBox="0 0 17 12"><path d="M0.1 5.8 Q3.5 1.6 5.4 0.8 H10.5 Q12.5 1.6 15.9 5.8 Q12.5 10 10.5 10.8 H5.4 Q3.5 10 0.1 5.8 Z" fill="#e4c820"/><circle cx="7.9" cy="5.8" r="3.8" fill="#fdf7c0"/><circle cx="7.7" cy="5.8" r="2.1" fill="#e2b91c"/><circle cx="8.8" cy="6.1" r="0.8" fill="#fdf7c0"/></svg></div><div class="dt" style="left:187px;top:485px">000154</div><div class="dt" style="left:293px;top:488px">Marine Satellite Radio Product Dev</div><div class="dt" style="left:540px;top:485px">Tetsuo Kendo</div><div class="a" style="left:30px;top:507px;width:1px;height:25px;background:#ebebeb"></div><div class="a" style="left:60px;top:507px;width:1px;height:25px;background:#ebebeb"></div><div class="a" style="left:90px;top:507px;width:1px;height:25px;background:#ebebeb"></div><div class="a" style="left:120px;top:507px;width:1px;height:25px;background:#ebebeb"></div><div class="a" style="left:150px;top:507px;width:1px;height:25px;background:#ebebeb"></div><div class="a" style="left:180px;top:507px;width:1px;height:25px;background:#ebebeb"></div><div class="a" style="left:233px;top:507px;width:1px;height:25px;background:#ebebeb"></div><div class="a" style="left:533px;top:507px;width:1px;height:25px;background:#ebebeb"></div><div class="a" style="left:653px;top:507px;width:1px;height:25px;background:#ebebeb"></div><div class="a" style="left:1px;top:531px;width:652px;height:1px;background:#ebebeb"></div><div class="ci" style="left:8px;top:510px"><svg width="16" height="16" viewBox="0 0 16 16"><circle cx="8" cy="8" r="8" fill="#e5303e"/><path d="M4.6 6.6 L8 9.8 L11.4 6.6" stroke="#fff" stroke-width="2" fill="none"/></svg></div><div class="ci" style="left:98px;top:510px"><svg width="16" height="16" viewBox="0 0 16 16"><circle cx="8" cy="8" r="8" fill="#2e7bcf"/><path d="M6.1 4.4 L11.6 8 L6.1 11.6 Z" fill="#fff"/></svg></div><div class="ci" style="left:127px;top:510px"><svg width="17" height="17" viewBox="0 0 17 17"><rect x="1.1" y="0" width="12.7" height="3.7" fill="#2e77c4"/><rect x="4.2" y="6" width="9.6" height="3.8" fill="#2e77c4"/><rect x="4.2" y="12" width="12.7" height="3.8" fill="#2e77c4"/></svg></div><div class="ci" style="left:158px;top:512px"><svg width="17" height="12" viewBox="0 0 17 12"><path d="M0.1 5.8 Q3.5 1.6 5.4 0.8 H10.5 Q12.5 1.6 15.9 5.8 Q12.5 10 10.5 10.8 H5.4 Q3.5 10 0.1 5.8 Z" fill="#e4c820"/><circle cx="7.9" cy="5.8" r="3.8" fill="#fdf7c0"/><circle cx="7.7" cy="5.8" r="2.1" fill="#e2b91c"/><circle cx="8.8" cy="6.1" r="0.8" fill="#fdf7c0"/></svg></div><div class="dt" style="left:187px;top:510px">000155</div><div class="dt" style="left:293px;top:513px">Plant Maintenance</div><div class="dt" style="left:540px;top:510px">Tetsuo Kendo</div><div class="a" style="left:30px;top:532px;width:1px;height:25px;background:#ebebeb"></div><div class="a" style="left:60px;top:532px;width:1px;height:25px;background:#ebebeb"></div><div class="a" style="left:90px;top:532px;width:1px;height:25px;background:#ebebeb"></div><div class="a" style="left:120px;top:532px;width:1px;height:25px;background:#ebebeb"></div><div class="a" style="left:150px;top:532px;width:1px;height:25px;background:#ebebeb"></div><div class="a" style="left:180px;top:532px;width:1px;height:25px;background:#ebebeb"></div><div class="a" style="left:233px;top:532px;width:1px;height:25px;background:#ebebeb"></div><div class="a" style="left:533px;top:532px;width:1px;height:25px;background:#ebebeb"></div><div class="a" style="left:653px;top:532px;width:1px;height:25px;background:#ebebeb"></div><div class="a" style="left:1px;top:556px;width:652px;height:1px;background:#ebebeb"></div><div class="ci" style="left:8px;top:535px"><svg width="16" height="16" viewBox="0 0 16 16"><circle cx="8" cy="8" r="8" fill="#e5303e"/><path d="M4.6 6.6 L8 9.8 L11.4 6.6" stroke="#fff" stroke-width="2" fill="none"/></svg></div><div class="ci" style="left:98px;top:535px"><svg width="16" height="16" viewBox="0 0 16 16"><circle cx="8" cy="8" r="8" fill="#2e7bcf"/><path d="M6.1 4.4 L11.6 8 L6.1 11.6 Z" fill="#fff"/></svg></div><div class="ci" style="left:127px;top:535px"><svg width="17" height="17" viewBox="0 0 17 17"><rect x="1.1" y="0" width="12.7" height="3.7" fill="#2e77c4"/><rect x="4.2" y="6" width="9.6" height="3.8" fill="#2e77c4"/><rect x="4.2" y="12" width="12.7" height="3.8" fill="#2e77c4"/></svg></div><div class="ci" style="left:158px;top:537px"><svg width="17" height="12" viewBox="0 0 17 12"><path d="M0.1 5.8 Q3.5 1.6 5.4 0.8 H10.5 Q12.5 1.6 15.9 5.8 Q12.5 10 10.5 10.8 H5.4 Q3.5 10 0.1 5.8 Z" fill="#e4c820"/><circle cx="7.9" cy="5.8" r="3.8" fill="#fdf7c0"/><circle cx="7.7" cy="5.8" r="2.1" fill="#e2b91c"/><circle cx="8.8" cy="6.1" r="0.8" fill="#fdf7c0"/></svg></div><div class="dt" style="left:187px;top:535px">000156</div><div class="dt" style="left:293px;top:538px">Portable Satellite Product Dev</div><div class="dt" style="left:540px;top:535px">Tetsuo Kendo</div><div class="a" style="left:30px;top:557px;width:1px;height:25px;background:#ebebeb"></div><div class="a" style="left:60px;top:557px;width:1px;height:25px;background:#ebebeb"></div><div class="a" style="left:90px;top:557px;width:1px;height:25px;background:#ebebeb"></div><div class="a" style="left:120px;top:557px;width:1px;height:25px;background:#ebebeb"></div><div class="a" style="left:150px;top:557px;width:1px;height:25px;background:#ebebeb"></div><div class="a" style="left:180px;top:557px;width:1px;height:25px;background:#ebebeb"></div><div class="a" style="left:233px;top:557px;width:1px;height:25px;background:#ebebeb"></div><div class="a" style="left:533px;top:557px;width:1px;height:25px;background:#ebebeb"></div><div class="a" style="left:653px;top:557px;width:1px;height:25px;background:#ebebeb"></div><div class="a" style="left:1px;top:581px;width:652px;height:1px;background:#ebebeb"></div><div class="ci" style="left:8px;top:560px"><svg width="16" height="16" viewBox="0 0 16 16"><circle cx="8.2" cy="7.9" r="7.4" fill="#f2ae0f"/><path d="M8.2 3.4 V9.2" stroke="#fff" stroke-width="1.7" fill="none"/><circle cx="8.2" cy="11.5" r="0.95" fill="#fff"/></svg></div><div class="ci" style="left:98px;top:560px"><svg width="16" height="16" viewBox="0 0 16 16"><circle cx="8" cy="8" r="8" fill="#2e7bcf"/><path d="M6.1 4.4 L11.6 8 L6.1 11.6 Z" fill="#fff"/></svg></div><div class="ci" style="left:127px;top:560px"><svg width="17" height="17" viewBox="0 0 17 17"><rect x="1.1" y="0" width="12.7" height="3.7" fill="#2e77c4"/><rect x="4.2" y="6" width="9.6" height="3.8" fill="#2e77c4"/><rect x="4.2" y="12" width="12.7" height="3.8" fill="#2e77c4"/></svg></div><div class="ci" style="left:158px;top:560px"><svg width="16" height="17" viewBox="0 0 16 17"><circle cx="8.1" cy="3.6" r="3.9" fill="#f07f30"/><path d="M0.9 15.9 V11.6 Q0.9 9 3.6 8.4 L6.6 7.6 H9.6 L12.6 8.4 Q14.9 9 14.9 11.6 V15.9 H10 L8.1 10.6 L6.2 15.9 Z" fill="#f07f30"/></svg></div><div class="dt" style="left:187px;top:560px">000157</div><div class="dt" style="left:293px;top:563px">Production Expansion Program</div><div class="dt" style="left:540px;top:560px">Alice Chain</div><div class="a" style="left:30px;top:582px;width:1px;height:25px;background:#ebebeb"></div><div class="a" style="left:60px;top:582px;width:1px;height:25px;background:#ebebeb"></div><div class="a" style="left:90px;top:582px;width:1px;height:25px;background:#ebebeb"></div><div class="a" style="left:120px;top:582px;width:1px;height:25px;background:#ebebeb"></div><div class="a" style="left:150px;top:582px;width:1px;height:25px;background:#ebebeb"></div><div class="a" style="left:180px;top:582px;width:1px;height:25px;background:#ebebeb"></div><div class="a" style="left:233px;top:582px;width:1px;height:25px;background:#ebebeb"></div><div class="a" style="left:533px;top:582px;width:1px;height:25px;background:#ebebeb"></div><div class="a" style="left:653px;top:582px;width:1px;height:25px;background:#ebebeb"></div><div class="a" style="left:1px;top:606px;width:652px;height:1px;background:#ebebeb"></div><div class="ci" style="left:8px;top:585px"><svg width="16" height="16" viewBox="0 0 16 16"><circle cx="7.5" cy="7.5" r="7.4" fill="#4a9e45"/><path d="M7.5 11.6 V4.2 M4.6 7 L7.5 4.1 L10.4 7" stroke="#fff" stroke-width="1.3" fill="none"/></svg></div><div class="ci" style="left:98px;top:585px"><svg width="16" height="16" viewBox="0 0 16 16"><circle cx="8" cy="8" r="8" fill="#2e7bcf"/><path d="M6.1 4.4 L11.6 8 L6.1 11.6 Z" fill="#fff"/></svg></div><div class="ci" style="left:127px;top:585px"><svg width="17" height="17" viewBox="0 0 17 17"><rect x="1.1" y="0" width="12.7" height="3.7" fill="#2e77c4"/><rect x="4.2" y="6" width="9.6" height="3.8" fill="#2e77c4"/><rect x="4.2" y="12" width="12.7" height="3.8" fill="#2e77c4"/></svg></div><div class="ci" style="left:158px;top:587px"><svg width="17" height="12" viewBox="0 0 17 12"><path d="M0.1 5.8 Q3.5 1.6 5.4 0.8 H10.5 Q12.5 1.6 15.9 5.8 Q12.5 10 10.5 10.8 H5.4 Q3.5 10 0.1 5.8 Z" fill="#e4c820"/><circle cx="7.9" cy="5.8" r="3.8" fill="#fdf7c0"/><circle cx="7.7" cy="5.8" r="2.1" fill="#e2b91c"/><circle cx="8.8" cy="6.1" r="0.8" fill="#fdf7c0"/></svg></div><div class="dt" style="left:187px;top:585px">000158</div><div class="dt" style="left:293px;top:588px">Recruitment Company Purchase</div><div class="dt" style="left:540px;top:585px">Alice Damam</div><div class="a" style="left:30px;top:607px;width:1px;height:25px;background:#ebebeb"></div><div class="a" style="left:60px;top:607px;width:1px;height:25px;background:#ebebeb"></div><div class="a" style="left:90px;top:607px;width:1px;height:25px;background:#ebebeb"></div><div class="a" style="left:120px;top:607px;width:1px;height:25px;background:#ebebeb"></div><div class="a" style="left:150px;top:607px;width:1px;height:25px;background:#ebebeb"></div><div class="a" style="left:180px;top:607px;width:1px;height:25px;background:#ebebeb"></div><div class="a" style="left:233px;top:607px;width:1px;height:25px;background:#ebebeb"></div><div class="a" style="left:533px;top:607px;width:1px;height:25px;background:#ebebeb"></div><div class="a" style="left:653px;top:607px;width:1px;height:25px;background:#ebebeb"></div><div class="a" style="left:1px;top:631px;width:652px;height:1px;background:#ebebeb"></div><div class="ci" style="left:8px;top:610px"><svg width="16" height="16" viewBox="0 0 16 16"><circle cx="8" cy="8" r="8" fill="#e5303e"/><path d="M4.6 6.6 L8 9.8 L11.4 6.6" stroke="#fff" stroke-width="2" fill="none"/></svg></div><div class="ci" style="left:98px;top:610px"><svg width="16" height="16" viewBox="0 0 16 16"><circle cx="8" cy="8" r="8" fill="#2e7bcf"/><path d="M6.1 4.4 L11.6 8 L6.1 11.6 Z" fill="#fff"/></svg></div><div class="ci" style="left:127px;top:610px"><svg width="17" height="17" viewBox="0 0 17 17"><rect x="1.1" y="0" width="12.7" height="3.7" fill="#2e77c4"/><rect x="4.2" y="6" width="9.6" height="3.8" fill="#2e77c4"/><rect x="4.2" y="12" width="12.7" height="3.8" fill="#2e77c4"/></svg></div><div class="ci" style="left:158px;top:612px"><svg width="17" height="12" viewBox="0 0 17 12"><path d="M0.1 5.8 Q3.5 1.6 5.4 0.8 H10.5 Q12.5 1.6 15.9 5.8 Q12.5 10 10.5 10.8 H5.4 Q3.5 10 0.1 5.8 Z" fill="#e4c820"/><circle cx="7.9" cy="5.8" r="3.8" fill="#fdf7c0"/><circle cx="7.7" cy="5.8" r="2.1" fill="#e2b91c"/><circle cx="8.8" cy="6.1" r="0.8" fill="#fdf7c0"/></svg></div><div class="dt" style="left:187px;top:610px">grc-01</div><div class="dt" style="left:293px;top:613px">Corporate Governance Initiatives</div><div class="dt" style="left:540px;top:610px">James J. Tooby</div><div class="a" style="left:5px;top:726px;width:92px;height:6px;background:#bdbdbd;border-radius:3px"></div><div class="a" style="left:654px;top:135px;width:8px;height:602px;background:#fff"></div><svg class="a" style="left:655px;top:148px" width="7" height="12" viewBox="0 0 7 12"><path d="M4.8 2.5 L2.2 6 L4.8 9.5" stroke="#888" stroke-width="1.3" fill="none"/></svg><div class="a" style="left:662px;top:135px;width:704px;height:602px;background:#fff;border-left:1px solid #d9d9d9"></div><div class="a" style="left:663px;top:135px;width:703px;height:26px;background:linear-gradient(#fdfdfd 0,#fafafa 10%,#f8f8f8 42%,#e2e2e2 46%,#e8e8e8 54%,#ededed 62%,#efefef 100%);border-bottom:1px solid #d9d9d9"></div><div class="t" style="left:667px;top:140px;font-size:12px;font-weight:bold;color:#1f5c9c">Gantt</div><div class="a" style="left:1344px;top:140px;width:15px;height:15px;border:1px solid #a8b8ca;border-radius:3px;background:#eff8fc"></div><svg class="a" style="left:1345px;top:141px" width="13" height="13" viewBox="0 0 13 13"><path d="M3.1 3.2 L6.6 6.7 L3.1 10.2 M7.4 3.2 L10.9 6.7 L7.4 10.2" stroke="#34558f" stroke-width="1.3" fill="none"/></svg><div class="a" style="left:663px;top:161px;width:702px;height:46px;overflow:hidden"><div class="a" style="left:0;top:0;width:703px;height:22px;background:linear-gradient(#f9f9f9,#ececec)"></div><div class="a" style="left:0;top:22px;width:703px;height:1px;background:#d6d6d6"></div><div class="a" style="left:0;top:23px;width:703px;height:23px;background:linear-gradient(#f7f7f7,#eaeaea)"></div><div class="a" style="left:0;top:46px;width:703px;height:1px;background:#d6d6d6"></div><div class="a" style="left:-13px;top:23px;width:16px;height:23px;background:linear-gradient(#e4e4e4,#d4d4d4)"></div><div class="a" style="left:-13px;top:23px;width:1px;height:23px;background:#d9d9d9"></div><div class="t" style="left:-13px;top:28px;width:16px;text-align:center;font-size:10px;color:#3a3a3a;transform:scaleX(0.82)">S</div><div class="a" style="left:3px;top:23px;width:16px;height:23px;background:linear-gradient(#e4e4e4,#d4d4d4)"></div><div class="a" style="left:3px;top:23px;width:1px;height:23px;background:#d9d9d9"></div><div class="t" style="left:3px;top:28px;width:16px;text-align:center;font-size:10px;color:#3a3a3a;transform:scaleX(0.82)">S</div><div class="a" style="left:3px;top:0;width:1px;height:46px;background:#d6d6d6"></div><div class="t" style="left:10px;top:5px;font-size:11px;color:#333">Aug/04/19</div><div class="a" style="left:19px;top:23px;width:1px;height:23px;background:#d9d9d9"></div><div class="t" style="left:19px;top:28px;width:16px;text-align:center;font-size:10px;color:#3a3a3a;transform:scaleX(0.82)">M</div><div class="a" style="left:35px;top:23px;width:1px;height:23px;background:#d9d9d9"></div><div class="t" style="left:35px;top:28px;width:16px;text-align:center;font-size:10px;color:#3a3a3a;transform:scaleX(0.82)">T</div><div class="a" style="left:51px;top:23px;width:1px;height:23px;background:#d9d9d9"></div><div class="t" style="left:51px;top:28px;width:16px;text-align:center;font-size:10px;color:#3a3a3a;transform:scaleX(0.82)">W</div><div class="a" style="left:67px;top:23px;width:1px;height:23px;background:#d9d9d9"></div><div class="t" style="left:67px;top:28px;width:16px;text-align:center;font-size:10px;color:#3a3a3a;transform:scaleX(0.82)">T</div><div class="a" style="left:83px;top:23px;width:1px;height:23px;background:#d9d9d9"></div><div class="t" style="left:83px;top:28px;width:16px;text-align:center;font-size:10px;color:#3a3a3a;transform:scaleX(0.82)">F</div><div class="a" style="left:99px;top:23px;width:16px;height:23px;background:linear-gradient(#e4e4e4,#d4d4d4)"></div><div class="a" style="left:99px;top:23px;width:1px;height:23px;background:#d9d9d9"></div><div class="t" style="left:99px;top:28px;width:16px;text-align:center;font-size:10px;color:#3a3a3a;transform:scaleX(0.82)">S</div><div class="a" style="left:115px;top:23px;width:16px;height:23px;background:linear-gradient(#e4e4e4,#d4d4d4)"></div><div class="a" style="left:115px;top:23px;width:1px;height:23px;background:#d9d9d9"></div><div class="t" style="left:115px;top:28px;width:16px;text-align:center;font-size:10px;color:#3a3a3a;transform:scaleX(0.82)">S</div><div class="a" style="left:115px;top:0;width:1px;height:46px;background:#d6d6d6"></div><div class="t" style="left:122px;top:5px;font-size:11px;color:#333">Aug/11/19</div><div class="a" style="left:131px;top:23px;width:1px;height:23px;background:#d9d9d9"></div><div class="t" style="left:131px;top:28px;width:16px;text-align:center;font-size:10px;color:#3a3a3a;transform:scaleX(0.82)">M</div><div class="a" style="left:147px;top:23px;width:1px;height:23px;background:#d9d9d9"></div><div class="t" style="left:147px;top:28px;width:16px;text-align:center;font-size:10px;color:#3a3a3a;transform:scaleX(0.82)">T</div><div class="a" style="left:163px;top:23px;width:1px;height:23px;background:#d9d9d9"></div><div class="t" style="left:163px;top:28px;width:16px;text-align:center;font-size:10px;color:#3a3a3a;transform:scaleX(0.82)">W</div><div class="a" style="left:179px;top:23px;width:1px;height:23px;background:#d9d9d9"></div><div class="t" style="left:179px;top:28px;width:16px;text-align:center;font-size:10px;color:#3a3a3a;transform:scaleX(0.82)">T</div><div class="a" style="left:195px;top:23px;width:1px;height:23px;background:#d9d9d9"></div><div class="t" style="left:195px;top:28px;width:16px;text-align:center;font-size:10px;color:#3a3a3a;transform:scaleX(0.82)">F</div><div class="a" style="left:211px;top:23px;width:16px;height:23px;background:linear-gradient(#e4e4e4,#d4d4d4)"></div><div class="a" style="left:211px;top:23px;width:1px;height:23px;background:#d9d9d9"></div><div class="t" style="left:211px;top:28px;width:16px;text-align:center;font-size:10px;color:#3a3a3a;transform:scaleX(0.82)">S</div><div class="a" style="left:227px;top:23px;width:16px;height:23px;background:linear-gradient(#e4e4e4,#d4d4d4)"></div><div class="a" style="left:227px;top:23px;width:1px;height:23px;background:#d9d9d9"></div><div class="t" style="left:227px;top:28px;width:16px;text-align:center;font-size:10px;color:#3a3a3a;transform:scaleX(0.82)">S</div><div class="a" style="left:227px;top:0;width:1px;height:46px;background:#d6d6d6"></div><div class="t" style="left:234px;top:5px;font-size:11px;color:#333">Aug/18/19</div><div class="a" style="left:243px;top:23px;width:1px;height:23px;background:#d9d9d9"></div><div class="t" style="left:243px;top:28px;width:16px;text-align:center;font-size:10px;color:#3a3a3a;transform:scaleX(0.82)">M</div><div class="a" style="left:259px;top:23px;width:1px;height:23px;background:#d9d9d9"></div><div class="t" style="left:259px;top:28px;width:16px;text-align:center;font-size:10px;color:#3a3a3a;transform:scaleX(0.82)">T</div><div class="a" style="left:275px;top:23px;width:1px;height:23px;background:#d9d9d9"></div><div class="t" style="left:275px;top:28px;width:16px;text-align:center;font-size:10px;color:#3a3a3a;transform:scaleX(0.82)">W</div><div class="a" style="left:291px;top:23px;width:1px;height:23px;background:#d9d9d9"></div><div class="t" style="left:291px;top:28px;width:16px;text-align:center;font-size:10px;color:#3a3a3a;transform:scaleX(0.82)">T</div><div class="a" style="left:307px;top:23px;width:1px;height:23px;background:#d9d9d9"></div><div class="t" style="left:307px;top:28px;width:16px;text-align:center;font-size:10px;color:#3a3a3a;transform:scaleX(0.82)">F</div><div class="a" style="left:323px;top:23px;width:16px;height:23px;background:linear-gradient(#e4e4e4,#d4d4d4)"></div><div class="a" style="left:323px;top:23px;width:1px;height:23px;background:#d9d9d9"></div><div class="t" style="left:323px;top:28px;width:16px;text-align:center;font-size:10px;color:#3a3a3a;transform:scaleX(0.82)">S</div><div class="a" style="left:339px;top:23px;width:16px;height:23px;background:linear-gradient(#e4e4e4,#d4d4d4)"></div><div class="a" style="left:339px;top:23px;width:1px;height:23px;background:#d9d9d9"></div><div class="t" style="left:339px;top:28px;width:16px;text-align:center;font-size:10px;color:#3a3a3a;transform:scaleX(0.82)">S</div><div class="a" style="left:339px;top:0;width:1px;height:46px;background:#d6d6d6"></div><div class="t" style="left:346px;top:5px;font-size:11px;color:#333">Aug/25/19</div><div class="a" style="left:355px;top:23px;width:1px;height:23px;background:#d9d9d9"></div><div class="t" style="left:355px;top:28px;width:16px;text-align:center;font-size:10px;color:#3a3a3a;transform:scaleX(0.82)">M</div><div class="a" style="left:371px;top:23px;width:1px;height:23px;background:#d9d9d9"></div><div class="t" style="left:371px;top:28px;width:16px;text-align:center;font-size:10px;color:#3a3a3a;transform:scaleX(0.82)">T</div><div class="a" style="left:387px;top:23px;width:1px;height:23px;background:#d9d9d9"></div><div class="t" style="left:387px;top:28px;width:16px;text-align:center;font-size:10px;color:#3a3a3a;transform:scaleX(0.82)">W</div><div class="a" style="left:403px;top:23px;width:1px;height:23px;background:#d9d9d9"></div><div class="t" style="left:403px;top:28px;width:16px;text-align:center;font-size:10px;color:#3a3a3a;transform:scaleX(0.82)">T</div><div class="a" style="left:419px;top:23px;width:1px;height:23px;background:#d9d9d9"></div><div class="t" style="left:419px;top:28px;width:16px;text-align:center;font-size:10px;color:#3a3a3a;transform:scaleX(0.82)">F</div><div class="a" style="left:435px;top:23px;width:16px;height:23px;background:linear-gradient(#e4e4e4,#d4d4d4)"></div><div class="a" style="left:435px;top:23px;width:1px;height:23px;background:#d9d9d9"></div><div class="t" style="left:435px;top:28px;width:16px;text-align:center;font-size:10px;color:#3a3a3a;transform:scaleX(0.82)">S</div><div class="a" style="left:451px;top:23px;width:16px;height:23px;background:linear-gradient(#e4e4e4,#d4d4d4)"></div><div class="a" style="left:451px;top:23px;width:1px;height:23px;background:#d9d9d9"></div><div class="t" style="left:451px;top:28px;width:16px;text-align:center;font-size:10px;color:#3a3a3a;transform:scaleX(0.82)">S</div><div class="a" style="left:451px;top:0;width:1px;height:46px;background:#d6d6d6"></div><div class="t" style="left:458px;top:5px;font-size:11px;color:#333">Sep/01/19</div><div class="a" style="left:467px;top:23px;width:1px;height:23px;background:#d9d9d9"></div><div class="t" style="left:467px;top:28px;width:16px;text-align:center;font-size:10px;color:#3a3a3a;transform:scaleX(0.82)">M</div><div class="a" style="left:483px;top:23px;width:1px;height:23px;background:#d9d9d9"></div><div class="t" style="left:483px;top:28px;width:16px;text-align:center;font-size:10px;color:#3a3a3a;transform:scaleX(0.82)">T</div><div class="a" style="left:499px;top:23px;width:1px;height:23px;background:#d9d9d9"></div><div class="t" style="left:499px;top:28px;width:16px;text-align:center;font-size:10px;color:#3a3a3a;transform:scaleX(0.82)">W</div><div class="a" style="left:515px;top:23px;width:1px;height:23px;background:#d9d9d9"></div><div class="t" style="left:515px;top:28px;width:16px;text-align:center;font-size:10px;color:#3a3a3a;transform:scaleX(0.82)">T</div><div class="a" style="left:531px;top:23px;width:1px;height:23px;background:#d9d9d9"></div><div class="t" style="left:531px;top:28px;width:16px;text-align:center;font-size:10px;color:#3a3a3a;transform:scaleX(0.82)">F</div><div class="a" style="left:547px;top:23px;width:16px;height:23px;background:linear-gradient(#e4e4e4,#d4d4d4)"></div><div class="a" style="left:547px;top:23px;width:1px;height:23px;background:#d9d9d9"></div><div class="t" style="left:547px;top:28px;width:16px;text-align:center;font-size:10px;color:#3a3a3a;transform:scaleX(0.82)">S</div><div class="a" style="left:563px;top:23px;width:16px;height:23px;background:linear-gradient(#e4e4e4,#d4d4d4)"></div><div class="a" style="left:563px;top:23px;width:1px;height:23px;background:#d9d9d9"></div><div class="t" style="left:563px;top:28px;width:16px;text-align:center;font-size:10px;color:#3a3a3a;transform:scaleX(0.82)">S</div><div class="a" style="left:563px;top:0;width:1px;height:46px;background:#d6d6d6"></div><div class="t" style="left:570px;top:5px;font-size:11px;color:#333">Sep/08/19</div><div class="a" style="left:579px;top:23px;width:1px;height:23px;background:#d9d9d9"></div><div class="t" style="left:579px;top:28px;width:16px;text-align:center;font-size:10px;color:#3a3a3a;transform:scaleX(0.82)">M</div><div class="a" style="left:595px;top:23px;width:1px;height:23px;background:#d9d9d9"></div><div class="t" style="left:595px;top:28px;width:16px;text-align:center;font-size:10px;color:#3a3a3a;transform:scaleX(0.82)">T</div><div class="a" style="left:611px;top:23px;width:1px;height:23px;background:#d9d9d9"></div><div class="t" style="left:611px;top:28px;width:16px;text-align:center;font-size:10px;color:#3a3a3a;transform:scaleX(0.82)">W</div><div class="a" style="left:627px;top:23px;width:1px;height:23px;background:#d9d9d9"></div><div class="t" style="left:627px;top:28px;width:16px;text-align:center;font-size:10px;color:#3a3a3a;transform:scaleX(0.82)">T</div><div class="a" style="left:643px;top:23px;width:1px;height:23px;background:#d9d9d9"></div><div class="t" style="left:643px;top:28px;width:16px;text-align:center;font-size:10px;color:#3a3a3a;transform:scaleX(0.82)">F</div><div class="a" style="left:659px;top:23px;width:16px;height:23px;background:linear-gradient(#e4e4e4,#d4d4d4)"></div><div class="a" style="left:659px;top:23px;width:1px;height:23px;background:#d9d9d9"></div><div class="t" style="left:659px;top:28px;width:16px;text-align:center;font-size:10px;color:#3a3a3a;transform:scaleX(0.82)">S</div><div class="a" style="left:675px;top:23px;width:16px;height:23px;background:linear-gradient(#e4e4e4,#d4d4d4)"></div><div class="a" style="left:675px;top:23px;width:1px;height:23px;background:#d9d9d9"></div><div class="t" style="left:675px;top:28px;width:16px;text-align:center;font-size:10px;color:#3a3a3a;transform:scaleX(0.82)">S</div><div class="a" style="left:675px;top:0;width:1px;height:46px;background:#d6d6d6"></div><div class="t" style="left:682px;top:5px;font-size:11px;color:#333">Sep/15/19</div><div class="a" style="left:691px;top:23px;width:1px;height:23px;background:#d9d9d9"></div><div class="t" style="left:691px;top:28px;width:16px;text-align:center;font-size:10px;color:#3a3a3a;transform:scaleX(0.82)">M</div></div><div class="a" style="left:663px;top:207px;width:691px;height:425px;overflow:hidden"><div class="a" style="left:-13px;top:0;width:16px;height:425px;background:#efefef"></div><div class="a" style="left:3px;top:0;width:16px;height:425px;background:#efefef"></div><div class="a" style="left:3px;top:0;width:1px;height:425px;background:#e2e2e2"></div><div class="a" style="left:99px;top:0;width:16px;height:425px;background:#efefef"></div><div class="a" style="left:115px;top:0;width:16px;height:425px;background:#efefef"></div><div class="a" style="left:115px;top:0;width:1px;height:425px;background:#e2e2e2"></div><div class="a" style="left:211px;top:0;width:16px;height:425px;background:#efefef"></div><div class="a" style="left:227px;top:0;width:16px;height:425px;background:#efefef"></div><div class="a" style="left:227px;top:0;width:1px;height:425px;background:#e2e2e2"></div><div class="a" style="left:323px;top:0;width:16px;height:425px;background:#efefef"></div><div class="a" style="left:339px;top:0;width:16px;height:425px;background:#efefef"></div><div class="a" style="left:339px;top:0;width:1px;height:425px;background:#e2e2e2"></div><div class="a" style="left:435px;top:0;width:16px;height:425px;background:#efefef"></div><div class="a" style="left:451px;top:0;width:16px;height:425px;background:#efefef"></div><div class="a" style="left:451px;top:0;width:1px;height:425px;background:#e2e2e2"></div><div class="a" style="left:547px;top:0;width:16px;height:425px;background:#efefef"></div><div class="a" style="left:563px;top:0;width:16px;height:425px;background:#efefef"></div><div class="a" style="left:563px;top:0;width:1px;height:425px;background:#e2e2e2"></div><div class="a" style="left:659px;top:0;width:16px;height:425px;background:#efefef"></div><div class="a" style="left:675px;top:0;width:16px;height:425px;background:#efefef"></div><div class="a" style="left:675px;top:0;width:1px;height:425px;background:#e2e2e2"></div></div><div class="a" style="left:663px;top:207px;width:702px;height:530px;overflow:hidden"><div class="a" style="left:0;top:4px;width:703px;height:6px;background:#000"></div><div class="bar" style="left:36px;top:204px;width:352px"></div><div class="gl" style="left:408px;top:204px">Tetsuo Kendo</div><div class="bar" style="left:276px;top:229px;width:256px"></div><div class="gl" style="left:552px;top:229px">Tetsuo Kendo</div><div class="bar" style="left:36px;top:254px;width:576px"></div><div class="gl" style="left:632px;top:254px">Tetsuo Kendo</div><div class="bar" style="left:692px;top:279px;width:45px"></div><div class="bar" style="left:580px;top:304px;width:16px"></div><div class="gl" style="left:616px;top:304px">Tetsuo Kendo</div><div class="bar" style="left:52px;top:354px;width:352px"></div><div class="gl" style="left:424px;top:354px">Alice Chain</div><div class="bar" style="left:36px;top:379px;width:336px"></div><div class="gl" style="left:392px;top:379px">Alice Damam</div><div class="gl" style="left:-8px;top:404px">James J. Tooby</div></div><div class="a" style="left:1365px;top:135px;width:1px;height:602px;background:#dcdcdc"></div><div class="a" style="left:1341px;top:726px;width:9px;height:6px;background:#c4c4c4;border-radius:3px"></div><div class="a" style="left:0;top:736px;width:1366px;height:2px;background:#dcdcdc"></div><div class="a" style="left:0;top:738px;width:1366px;height:28px;background:#fff;border-left:2px solid #dcdcdc"></div><div class="a" style="left:0;top:766px;width:1366px;height:2px;background:#dcdcdc"></div><div class="a" style="left:927px;top:741px;width:1px;height:22px;background:#cfcfcf"></div><div class="a" style="left:1015px;top:741px;width:1px;height:22px;background:#cfcfcf"></div><div class="a" style="left:1125px;top:741px;width:1px;height:22px;background:#cfcfcf"></div><div class="t" style="left:939px;top:745px;font-size:12px;color:#333">Projects:&nbsp; 16</div><div class="t" style="left:1027px;top:745px;font-size:12px;color:#333">Program files:&nbsp; 0</div><svg class="a" style="left:1133px;top:744px" width="17" height="16" viewBox="0 0 17 16"><circle cx="6.5" cy="6.5" r="4.8" fill="#fff" stroke="#555" stroke-width="2"/><path d="M10 10 L15 15" stroke="#555" stroke-width="3" stroke-linecap="round"/></svg><div class="t" style="left:1154px;top:745px;font-size:12px;color:#333">Zoom</div><div class="dd" style="left:1192px;top:751px;border-top-color:#333"></div><svg class="a" style="left:1210px;top:743px" width="18" height="18" viewBox="0 0 18 18"><circle cx="9" cy="9" r="7.5" fill="#f0f0f0" stroke="#aaa" stroke-width="1"/><path d="M5 9 H13" stroke="#555" stroke-width="2"/></svg><div class="a" style="left:1234px;top:748px;width:100px;height:7px;background:linear-gradient(#ddd,#f4f4f4);border:1px solid #bbb;border-radius:3px"></div><svg class="a" style="left:1319px;top:743px" width="16" height="18" viewBox="0 0 16 18"><path d="M1.5 2.5 Q1.5 1 3 1 H13 Q14.5 1 14.5 2.5 V10 L8 16 L1.5 10 Z" fill="#d2d2d2" stroke="#8f8f8f" stroke-width="1"/></svg><svg class="a" style="left:1339px;top:743px" width="18" height="18" viewBox="0 0 18 18"><circle cx="9" cy="9" r="7.5" fill="#f0f0f0" stroke="#aaa" stroke-width="1"/><path d="M5 9 H13 M9 5 V13" stroke="#555" stroke-width="2"/></svg></body></html>
